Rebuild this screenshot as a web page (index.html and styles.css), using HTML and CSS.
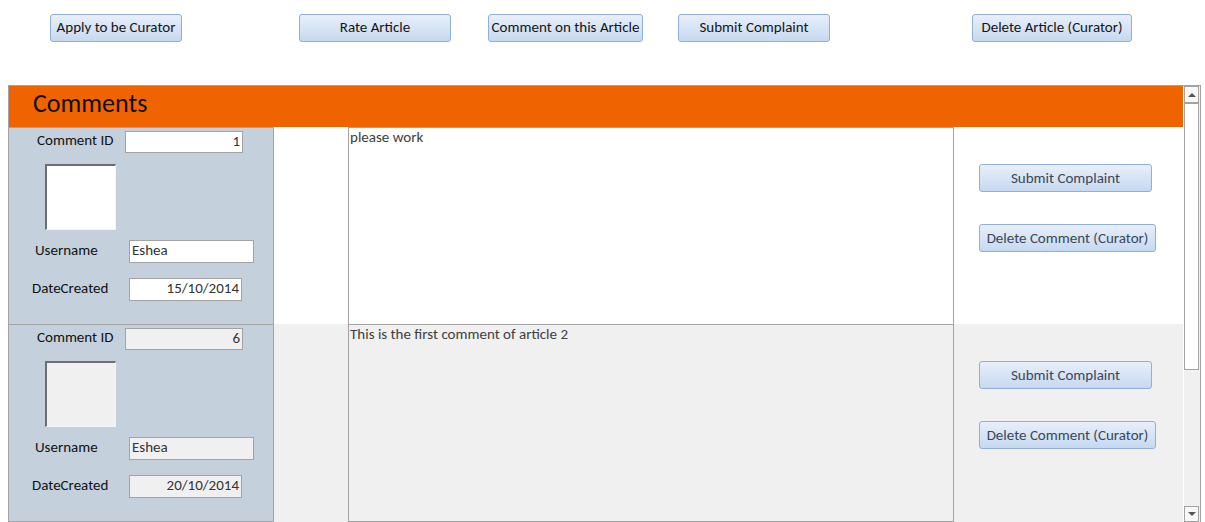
FILE: index.html
```html
<!DOCTYPE html>
<html>
<head>
<meta charset="utf-8">
<link rel="stylesheet" href="styles.css">
</head>
<body>
<div class="toolbar">
  <button class="btn b1">Apply to be Curator</button>
  <button class="btn b2">Rate Article</button>
  <button class="btn b3">Comment on this Article</button>
  <button class="btn b4">Submit Complaint</button>
  <button class="btn b5">Delete Article (Curator)</button>
</div>
<div class="subform">
  <div class="main">
    <div class="header">Comments</div>
    <div class="row">
      <div class="panel">
        <div class="line l-id"><span class="label">Comment ID</span><div class="field f-id num">1</div></div>
        <div class="photo"></div>
        <div class="line l-user"><span class="label">Username</span><div class="field f-user">Eshea</div></div>
        <div class="line l-date"><span class="label">DateCreated</span><div class="field f-date num">15/10/2014</div></div>
      </div>
      <div class="spacer"></div>
      <div class="memo">please work</div>
      <div class="actions">
        <button class="btn side s1">Submit Complaint</button>
        <button class="btn side s2">Delete Comment (Curator)</button>
      </div>
    </div>
    <div class="row alt last">
      <div class="panel">
        <div class="line l-id"><span class="label">Comment ID</span><div class="field f-id num">6</div></div>
        <div class="photo"></div>
        <div class="line l-user"><span class="label">Username</span><div class="field f-user">Eshea</div></div>
        <div class="line l-date"><span class="label">DateCreated</span><div class="field f-date num">20/10/2014</div></div>
      </div>
      <div class="spacer"></div>
      <div class="memo">This is the first comment of article 2</div>
      <div class="actions">
        <button class="btn side s1">Submit Complaint</button>
        <button class="btn side s2">Delete Comment (Curator)</button>
      </div>
    </div>
  </div>
  <div class="scrollbar">
    <div class="sb-btn"><span class="tri up"></span></div>
    <div class="thumb"></div>
    <div class="track"></div>
    <div class="sb-btn down"><span class="tri dn"></span></div>
  </div>
</div>
</body>
</html>
```
FILE: styles.css
```css
* { box-sizing: border-box; }
html, body { margin: 0; padding: 0; background: #fff; overflow: hidden; }
body {
  width: 1205px; height: 522px;
  font-family: "Carlito", "Lato", "Liberation Sans", sans-serif;
  font-size: 15px;
  color: #1a1a1a;
}
.toolbar {
  height: 85px;
  padding-top: 14px;
  display: flex;
  align-items: flex-start;
}
.btn {
  font-family: inherit;
  font-size: 15px;
  height: 28px;
  padding: 0 0 2px 0;
  border: 1px solid #90b0d8;
  border-radius: 3px;
  background: linear-gradient(#e8eff9, #c6d9f1);
  color: #151515;
  cursor: default;
  white-space: nowrap;
}
.b1 { margin-left: 50px; width: 132px; }
.b2 { margin-left: 117px; width: 152px; }
.b3 { margin-left: 37px; width: 155px; }
.b4 { margin-left: 35px; width: 152px; }
.b5 { margin-left: 142px; width: 160px; }

.subform {
  margin-left: 8px;
  width: 1193px;
  height: 437px;
  border: 1px solid #a3a3a3;
  border-bottom: none;
  display: flex;
}
.main { width: 1174px; display: flex; flex-direction: column; }
.header {
  height: 41px;
  background: #ef6400;
  padding-left: 24px;
  font-size: 26px;
  line-height: 34px;
  color: #111;
}
.row { display: flex; height: 197px; background: #fff; }
.row.last { height: 198px; }
.panel {
  width: 265px;
  background: #c4d0dc;
  border-top: 1px solid #a3a3a3;
  border-right: 1px solid #a3a3a3;
}
.row.last .panel, .row.last .memo { border-bottom: 1px solid #a3a3a3; }
.spacer { width: 74px; }
.memo {
  width: 606px;
  border: 1px solid #a3a3a3;
  border-bottom: none;
  padding: 0 1px;
  color: #404040;
  line-height: 18px;
}
.actions { width: 229px; padding-left: 25px; display: flex; flex-direction: column; align-items: flex-start; }
.side { color: #3a4658; padding: 0; }
.s1 { margin-top: 37px; width: 173px; }
.s2 { margin-top: 32px; width: 177px; }
.row.alt .spacer, .row.alt .memo, .row.alt .actions { background: #f0f0f0; }

.line { display: flex; align-items: center; }
.label { color: #111; margin-bottom: 4px; white-space: nowrap; }
.field {
  height: 22px;
  border: 1px solid #a3a3a3;
  background: #fff;
  color: #333;
  padding: 0 2px;
  line-height: 19px;
}
.row.alt .field { background: #f0f0f0; }
.num { text-align: right; }
.l-id { margin-top: 3px; }
.l-id .label { margin-left: 28px; width: 88px; }
.f-id { width: 118px; }
.photo {
  margin-top: 11px;
  margin-left: 36px;
  width: 71px; height: 66px;
  background: #fff;
  border-top: 2px solid #6e6e6e;
  border-left: 2px solid #6e6e6e;
  border-right: 1px solid #f4f4f4;
  border-bottom: 1px solid #f4f4f4;
}
.row.alt .photo { background: #f0f0f0; }
.l-user { margin-top: 10px; }
.l-user .label { margin-left: 26px; width: 94px; }
.f-user { width: 125px; height: 23px; }
.l-date { margin-top: 15px; }
.l-date .label { margin-left: 23px; width: 97px; }
.f-date { width: 113px; height: 23px; }

.scrollbar {
  width: 17px;
  background: #f0f0f0;
  border-left: 1px solid #fff;
  display: flex; flex-direction: column;
}
.sb-btn {
  height: 17px;
  width: 15px;
  border: 1px solid #a3a3a3;
  background: #f7f7f7;
  display: flex; align-items: center; justify-content: center;
}
.thumb { height: 267px; width: 15px; border: 1px solid #a3a3a3; background: #fff; }
.track { height: 136px; }
.sb-btn.down { height: 16px; }
.tri { width: 0; height: 0; border-left: 4px solid transparent; border-right: 4px solid transparent; }
.tri.up { border-bottom: 4px solid #555; }
.tri.dn { border-top: 4px solid #555; }
```
